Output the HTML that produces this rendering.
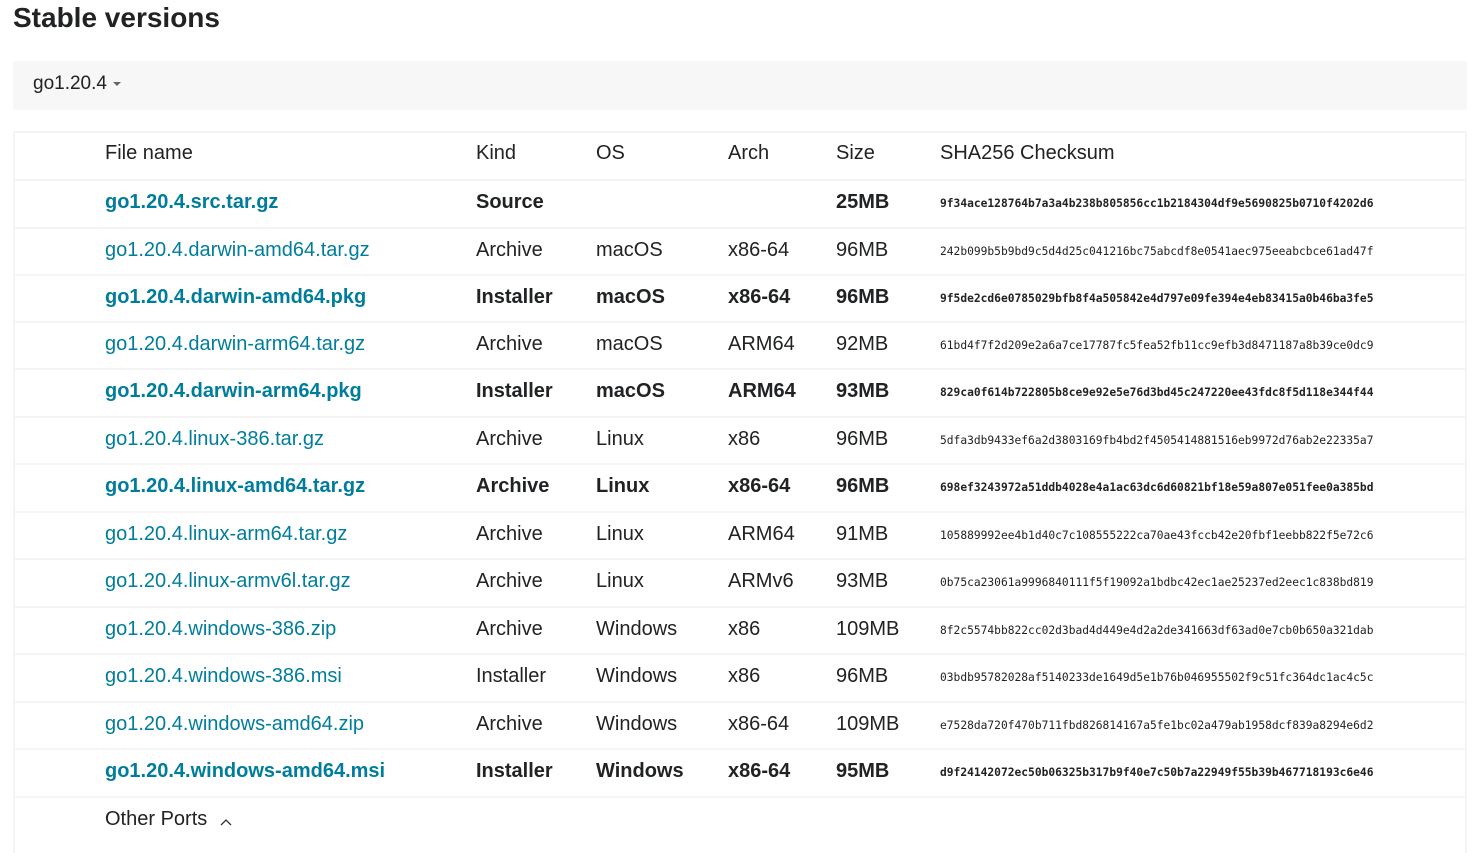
<!DOCTYPE html>
<html><head><style>
body{margin:0;background:#fff;font-family:"Liberation Sans",Arial,sans-serif;color:#202224;}
h2{position:absolute;left:13px;top:0;margin:0;font-size:28px;line-height:36px;font-weight:bold;}
.ver{position:absolute;left:13px;top:61px;width:1454px;height:49px;background:#f7f7f7;}
.ver span{position:absolute;left:20px;top:12px;font-size:19px;}
.caret{display:inline-block;width:0;height:0;border-left:4px solid transparent;border-right:4px solid transparent;border-top:4px solid #666;margin-left:6px;vertical-align:middle;}
.tbl{position:absolute;left:13px;top:131px;width:1450px;border:2px solid #f4f4f4;border-bottom:none;height:720px;}
.row{position:absolute;left:0;width:1450px;border-top:2px solid #f4f4f4;font-size:20px;}
.row div{position:absolute;top:10px;white-space:nowrap;}
.c1{left:90px}.c2{left:461px}.c3{left:581px}.c4{left:713px}.c5{left:821px}
.c6{left:925px;font-family:"DejaVu Sans Mono","Liberation Mono",monospace;font-size:11.25px;top:16px!important;}
a{color:#007d9c;text-decoration:none}
.b{font-weight:bold}
</style></head><body>
<h2>Stable versions</h2>
<div class="ver"><span>go1.20.4<i class="caret"></i></span></div>
<div class="tbl">
<div class="row" style="top:-2px;border-top:none"><div class="c1" style="top:11px">File name</div><div class="c2" style="top:11px">Kind</div><div class="c3" style="top:11px">OS</div><div class="c4" style="top:11px">Arch</div><div class="c5" style="top:11px">Size</div><div class="c6" style="top:11px!important;font-family:'Liberation Sans',sans-serif;font-size:20px">SHA256 Checksum</div></div>
<div class="row b" style="top:46px"><div class="c1"><a>go1.20.4.src.tar.gz</a></div><div class="c2">Source</div><div class="c3"></div><div class="c4"></div><div class="c5">25MB</div><div class="c6">9f34ace128764b7a3a4b238b805856cc1b2184304df9e5690825b0710f4202d6</div></div>
<div class="row" style="top:94px"><div class="c1"><a>go1.20.4.darwin-amd64.tar.gz</a></div><div class="c2">Archive</div><div class="c3">macOS</div><div class="c4">x86-64</div><div class="c5">96MB</div><div class="c6">242b099b5b9bd9c5d4d25c041216bc75abcdf8e0541aec975eeabcbce61ad47f</div></div>
<div class="row b" style="top:141px"><div class="c1"><a>go1.20.4.darwin-amd64.pkg</a></div><div class="c2">Installer</div><div class="c3">macOS</div><div class="c4">x86-64</div><div class="c5">96MB</div><div class="c6">9f5de2cd6e0785029bfb8f4a505842e4d797e09fe394e4eb83415a0b46ba3fe5</div></div>
<div class="row" style="top:188px"><div class="c1"><a>go1.20.4.darwin-arm64.tar.gz</a></div><div class="c2">Archive</div><div class="c3">macOS</div><div class="c4">ARM64</div><div class="c5">92MB</div><div class="c6">61bd4f7f2d209e2a6a7ce17787fc5fea52fb11cc9efb3d8471187a8b39ce0dc9</div></div>
<div class="row b" style="top:235px"><div class="c1"><a>go1.20.4.darwin-arm64.pkg</a></div><div class="c2">Installer</div><div class="c3">macOS</div><div class="c4">ARM64</div><div class="c5">93MB</div><div class="c6">829ca0f614b722805b8ce9e92e5e76d3bd45c247220ee43fdc8f5d118e344f44</div></div>
<div class="row" style="top:283px"><div class="c1"><a>go1.20.4.linux-386.tar.gz</a></div><div class="c2">Archive</div><div class="c3">Linux</div><div class="c4">x86</div><div class="c5">96MB</div><div class="c6">5dfa3db9433ef6a2d3803169fb4bd2f4505414881516eb9972d76ab2e22335a7</div></div>
<div class="row b" style="top:330px"><div class="c1"><a>go1.20.4.linux-amd64.tar.gz</a></div><div class="c2">Archive</div><div class="c3">Linux</div><div class="c4">x86-64</div><div class="c5">96MB</div><div class="c6">698ef3243972a51ddb4028e4a1ac63dc6d60821bf18e59a807e051fee0a385bd</div></div>
<div class="row" style="top:378px"><div class="c1"><a>go1.20.4.linux-arm64.tar.gz</a></div><div class="c2">Archive</div><div class="c3">Linux</div><div class="c4">ARM64</div><div class="c5">91MB</div><div class="c6">105889992ee4b1d40c7c108555222ca70ae43fccb42e20fbf1eebb822f5e72c6</div></div>
<div class="row" style="top:425px"><div class="c1"><a>go1.20.4.linux-armv6l.tar.gz</a></div><div class="c2">Archive</div><div class="c3">Linux</div><div class="c4">ARMv6</div><div class="c5">93MB</div><div class="c6">0b75ca23061a9996840111f5f19092a1bdbc42ec1ae25237ed2eec1c838bd819</div></div>
<div class="row" style="top:473px"><div class="c1"><a>go1.20.4.windows-386.zip</a></div><div class="c2">Archive</div><div class="c3">Windows</div><div class="c4">x86</div><div class="c5">109MB</div><div class="c6">8f2c5574bb822cc02d3bad4d449e4d2a2de341663df63ad0e7cb0b650a321dab</div></div>
<div class="row" style="top:520px"><div class="c1"><a>go1.20.4.windows-386.msi</a></div><div class="c2">Installer</div><div class="c3">Windows</div><div class="c4">x86</div><div class="c5">96MB</div><div class="c6">03bdb95782028af5140233de1649d5e1b76b046955502f9c51fc364dc1ac4c5c</div></div>
<div class="row" style="top:568px"><div class="c1"><a>go1.20.4.windows-amd64.zip</a></div><div class="c2">Archive</div><div class="c3">Windows</div><div class="c4">x86-64</div><div class="c5">109MB</div><div class="c6">e7528da720f470b711fbd826814167a5fe1bc02a479ab1958dcf839a8294e6d2</div></div>
<div class="row b" style="top:615px"><div class="c1"><a>go1.20.4.windows-amd64.msi</a></div><div class="c2">Installer</div><div class="c3">Windows</div><div class="c4">x86-64</div><div class="c5">95MB</div><div class="c6">d9f24142072ec50b06325b317b9f40e7c50b7a22949f55b39b467718193c6e46</div></div>
<div class="row" style="top:663px"><div class="c1">Other Ports <svg width="14" height="10" style="margin-left:6px;vertical-align:-2px"><path d="M2 8 L7 3 L12 8" stroke="#333" stroke-width="1.3" fill="none"/></svg></div></div>
</div>
</body></html>
